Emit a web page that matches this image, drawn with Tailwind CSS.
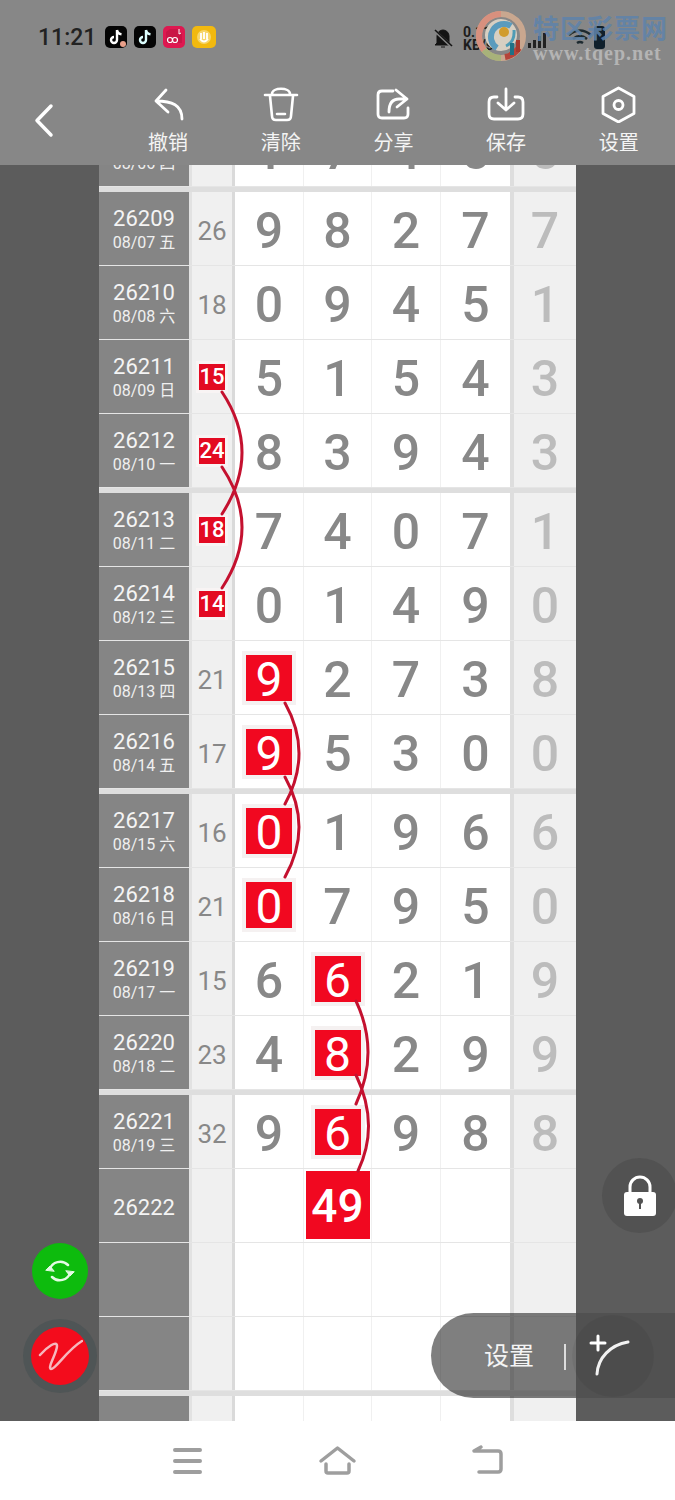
<!doctype html>
<html lang="zh-CN">
<head>
<meta charset="UTF-8" />
<meta name="viewport" content="width=device-width, initial-scale=1.0" />
<title>走势图</title>
<script src="https://cdn.jsdelivr.net/npm/@tailwindcss/browser@4"></script>
</head>
<body class="relative w-[675px] h-[1500px] overflow-hidden bg-white font-['Roboto','Noto_Sans_CJK_SC',sans-serif]">

<!-- Status bar + toolbar -->
<header class="h-[165px] bg-[#878787] relative z-10">
  <div class="h-[85px] flex pl-[38px] pt-[26px] items-start">
    <span class="text-[23px] leading-[23px] font-medium text-[#222] w-[67px]">11:21</span>
    <div class="flex gap-[7px]">
      <svg width="22" height="22" viewBox="0 0 22 22"><rect width="22" height="22" rx="5" fill="#050505"/><path d="M12 4v10a3 3 0 1 1-3-3M12 4c.4 2.6 2 4 4.500 4.300" fill="none" stroke="#fff" stroke-width="2.400"/><circle cx="18" cy="18" r="3" fill="#e9a08a"/></svg>
      <svg width="22" height="22" viewBox="0 0 22 22"><rect width="22" height="22" rx="5" fill="#050505"/><path d="M12 4v10a3 3 0 1 1-3-3M12 4c.4 2.600 2 4 4.500 4.300" fill="none" stroke="#dff" stroke-width="2.400"/></svg>
      <svg width="22" height="22" viewBox="0 0 22 22"><rect width="22" height="22" rx="5" fill="#de1850"/><path d="M3 6l4-3h8l4 5v9H3z" fill="#c91546"/><circle cx="7" cy="14" r="2.500" fill="none" stroke="#fff" stroke-width="1.200"/><circle cx="12" cy="14" r="2.500" fill="none" stroke="#fff" stroke-width="1.200"/><path d="M16 3v5l2-1" stroke="#fff" fill="none"/></svg>
      <svg width="24" height="22" viewBox="0 0 24 22"><rect width="24" height="22" rx="5" fill="#f2b90f"/><circle cx="12" cy="11" r="7" fill="#f7d66a"/><path d="M9 7v6M12 6v7M15 7v6M8 13q4 5 8 0" stroke="#fff" stroke-width="1.800" fill="none"/></svg>
    </div>
    <svg class="ml-[216px] mt-[1px]" width="22" height="22" viewBox="0 0 22 22"><path d="M5 16V9a6 6 0 0 1 12 0v7l2 2H3zM9 20h4" fill="#141414" stroke="#141414"/><path d="M2 3l18 17" stroke="#878787" stroke-width="3"/><path d="M3 3l17 16" stroke="#141414" stroke-width="1.600"/></svg>
    <div class="ml-[9px] text-[14px] leading-[13px] font-bold text-[#1d1d1d] w-[30px]">0.11<br />KB/s</div>
    <div class="flex items-end h-[22px] gap-[2px] ml-[35px]">
      <span class="w-[3px] h-[5px] bg-[#222]"></span><span class="w-[3px] h-[8px] bg-[#222]"></span><span class="w-[3px] h-[12px] bg-[#222]"></span><span class="w-[3px] h-[15px] bg-[#222]"></span>
    </div>
    <svg class="ml-[22px]" width="24" height="22" viewBox="0 0 24 22"><path d="M1 9q11-9 22 0M5 13q7-6 14 0M9 17q3-2 6 0" fill="none" stroke="#1d2a30" stroke-width="2.500"/></svg>
    <span class="ml-[2px] w-[11px] h-[23px] rounded-[3px] bg-[#10202c]"></span>
  </div>
  <nav class="flex items-start">
    <div class="w-[112px] pl-[30px] pt-[15px]">
      <svg width="30" height="40" viewBox="30 100 30 40"><path d="M51 106L37 120.500L51 135" fill="none" stroke="#fff" stroke-width="3.500" stroke-linecap="round" stroke-linejoin="round"/></svg>
    </div>
    <div class="w-[113px] flex flex-col items-center text-[20px] leading-[24px] text-[#f4f4f4]">
      <svg class="mb-[8px]" width="40" height="38" viewBox="148 85 40 38"><path d="M166 90L156 101L168 112M156 101C172 101 182 105 182 119" fill="none" stroke="#fff" stroke-width="2.800" stroke-linecap="round" stroke-linejoin="round"/></svg>
      <span>撤销</span>
    </div>
    <div class="w-[113px] flex flex-col items-center text-[20px] leading-[24px] text-[#f4f4f4]">
      <svg class="mb-[8px]" width="40" height="38" viewBox="261 85 40 38"><path d="M265 95H297M272 94C272 87 290 87 290 94M270 96L272 116Q272 120 276 120H287Q291 120 291 116L293 96M277 114H285" fill="none" stroke="#fff" stroke-width="2.600" stroke-linecap="round" stroke-linejoin="round"/></svg>
      <span>清除</span>
    </div>
    <div class="w-[113px] flex flex-col items-center text-[20px] leading-[24px] text-[#f4f4f4]">
      <svg class="mb-[8px]" width="40" height="38" viewBox="374 85 40 38"><path d="M394 91H383Q379 91 379 95V114Q379 118 383 118H405Q409 118 409 114V108M397 90L408 99L398 107M408 99H400Q390 99 390 112" fill="none" stroke="#fff" stroke-width="2.800" stroke-linecap="round" stroke-linejoin="round"/></svg>
      <span>分享</span>
    </div>
    <div class="w-[113px] flex flex-col items-center text-[20px] leading-[24px] text-[#f4f4f4]">
      <svg class="mb-[8px]" width="40" height="38" viewBox="486 85 40 38"><path d="M497 97H494Q489 97 489 102V114Q489 119 494 119H518Q523 119 523 114V102Q523 97 518 97H515M506 89V110M498 103L506 110L514 103" fill="none" stroke="#fff" stroke-width="2.800" stroke-linecap="round" stroke-linejoin="round"/></svg>
      <span>保存</span>
    </div>
    <div class="w-[113px] flex flex-col items-center text-[20px] leading-[24px] text-[#f4f4f4]">
      <svg class="mb-[8px]" width="40" height="38" viewBox="599 85 40 38"><path d="M618.500 88L634 96.500V113.500L618.500 122L603 113.500V96.500Z" fill="none" stroke="#fff" stroke-width="2.800" stroke-linejoin="round"/><circle cx="618.500" cy="105" r="4.500" fill="none" stroke="#fff" stroke-width="2.800"/></svg>
      <span>设置</span>
    </div>
  </nav>
</header>

<!-- Watermark -->
<div class="absolute z-20 left-[475px] top-[10px] flex items-start">
  <svg width="52" height="52" viewBox="0 0 52 52" fill="none">
    <circle cx="26" cy="26" r="22" stroke="#c9a78f" stroke-width="6"/>
    <path d="M26 4A22 22 0 0 0 9 40" stroke="#d8907e" stroke-width="6"/>
    <path d="M9 40A22 22 0 0 0 26 48" stroke="#a8b27a" stroke-width="6"/>
    <path d="M44 38A22 22 0 0 1 30 47" stroke="#b5443a" stroke-width="6"/>
    <circle cx="26" cy="25" r="16" fill="#d7cfc2"/>
    <path d="M36 16A13 13 0 1 0 22 38" stroke="#5a9bbd" stroke-width="6"/>
    <circle cx="29" cy="22" r="5" fill="#d19c2e"/>
    <path d="M31 36Q40 32 39 20" stroke="#4f9cb5" stroke-width="3"/>
    <path d="M37 33v12" stroke="#1f7186" stroke-width="4"/>
    <path d="M43 30v12" stroke="#a5382c" stroke-width="4"/>
  </svg>
  <div class="ml-[6px] mt-[5px]">
    <div class="text-[26px] leading-[28px] tracking-[1px] font-bold text-[#5f83aa]/90 whitespace-nowrap">特区彩票网</div>
    <div class="font-['Liberation_Serif',serif] text-[20px] leading-[20px] font-bold tracking-[1px] text-[#b4b4b4] whitespace-nowrap">www.tqep.net</div>
  </div>
</div>

<!-- Chart -->
<main class="h-[1256px] flex bg-[#5c5c5c] overflow-hidden">
  <div class="w-[99px]"></div>
  <div id="chart" class="w-[477px] mt-[-52px] bg-white"></div>
</main>

<!-- Connecting lines -->
<svg class="absolute left-0 top-0 z-[5] pointer-events-none" width="675" height="1500" viewBox="0 0 675 1500" fill="none" stroke="#c4112f" stroke-width="3" stroke-linecap="round">
  <path d="M222 392Q262 452 222 514M222 467Q262 527 222 588" />
  <path d="M285 703Q313 753 285 804M285 777Q313 827 285 877" />
  <path d="M356 1001Q380 1052 356 1104M356 1075Q380 1125 358 1171" />
</svg>

<!-- Floating buttons -->
<div class="absolute z-10 left-[32px] top-[1243px] w-[56px] h-[56px] rounded-full bg-[#0dbb0d] flex items-center justify-center">
  <svg width="32" height="32" viewBox="0 0 32 32" fill="none" stroke="#e4fbe4" stroke-width="2.500" stroke-linecap="round"><path d="M6 14C8 7 18 4 24 10M26 18C24 25 14 28 8 22"/><path d="M2 15L6 11L10 16Z M30 17L26 21L22 16Z" fill="#e4fbe4" stroke-width="1"/></svg>
</div>
<div class="absolute z-10 left-[23px] top-[1319px] w-[74px] h-[74px] rounded-full bg-[#4f5556] flex items-center justify-center">
  <div class="w-[58px] h-[58px] rounded-full bg-[#f30c1c] flex items-center justify-center">
    <svg width="46" height="46" viewBox="0 0 46 46" fill="none" stroke="#f6b7bd" stroke-width="2.500" stroke-linecap="round"><path d="M3 22C10 14 20 7 20 13C20 20 10 35 14 36C18 37 30 17 45 8"/></svg>
  </div>
</div>
<div class="absolute z-10 left-[602px] top-[1158px] w-[75px] h-[75px] rounded-full bg-[#525252] flex items-center justify-center">
  <svg width="36" height="42" viewBox="0 0 36 42"><path d="M8 19V12a10 10 0 0 1 20 0v7" fill="none" stroke="#fff" stroke-width="3"/><rect x="2" y="17" width="32" height="24" rx="3" fill="#fff"/><circle cx="18" cy="26" r="3" fill="#525252"/><path d="M18 27v7" stroke="#525252" stroke-width="2"/></svg>
</div>
<div class="absolute z-10 left-[431px] top-[1313px] w-[244px] h-[85px] flex">
  <div class="w-[145px] rounded-l-[43px] bg-black/50 flex items-center pl-[53px] pt-[2px]">
    <span class="text-[25px] leading-[30px] text-[#f4f4f4]">设置</span>
    <span class="ml-[30px] w-[2px] h-[26px] bg-[#ddd]"></span>
  </div>
  <div class="w-[99px] bg-[#515151] flex items-center">
    <svg class="ml-[10px]" width="48" height="46" viewBox="0 0 48 46" fill="none" stroke="#fff" stroke-width="3" stroke-linecap="round"><path d="M11 41C12 25 24 12 42 9"/></svg>
  </div>
</div>
<div class="absolute z-10 left-[572px] top-[1315px] w-[82px] h-[82px] rounded-full bg-black/5"></div>
<svg class="absolute z-10 left-[586px] top-[1331px]" width="24" height="24" viewBox="0 0 24 24" stroke="#fff" stroke-width="3" stroke-linecap="round"><path d="M5 12H19M12 5V19"/></svg>

<!-- System navigation -->
<footer class="h-[79px] flex items-start justify-center relative">
  <svg width="675" height="79" viewBox="0 1421 675 79" fill="none" stroke="#9e9e9e" stroke-width="4" stroke-linecap="round" stroke-linejoin="round">
    <path d="M175 1450H200M175 1461H200M175 1472H200" />
    <path d="M321 1461L337.500 1448L354 1461M326 1464V1471Q326 1473 328 1473H347Q349 1473 349 1471V1464" stroke-width="3.500" />
    <path d="M474 1451H498Q501 1451 501 1454V1469Q501 1472 498 1472H479M474 1451L481 1447" stroke-width="3.500" />
  </svg>
</footer>

<script>
  // id, date, sum, four digits, last, highlight
  const rows = [
    ["", "08/06 四", "", ["1", "7", "4", "5"], "5"],
    ["26209", "08/07 五", "26", ["9", "8", "2", "7"], "7"],
    ["26210", "08/08 六", "18", ["0", "9", "4", "5"], "1"],
    ["26211", "08/09 日", "15", ["5", "1", "5", "4"], "3", "sum"],
    ["26212", "08/10 一", "24", ["8", "3", "9", "4"], "3", "sum"],
    ["26213", "08/11 二", "18", ["7", "4", "0", "7"], "1", "sum"],
    ["26214", "08/12 三", "14", ["0", "1", "4", "9"], "0", "sum"],
    ["26215", "08/13 四", "21", ["9", "2", "7", "3"], "8", 0],
    ["26216", "08/14 五", "17", ["9", "5", "3", "0"], "0", 0],
    ["26217", "08/15 六", "16", ["0", "1", "9", "6"], "6", 0],
    ["26218", "08/16 日", "21", ["0", "7", "9", "5"], "0", 0],
    ["26219", "08/17 一", "15", ["6", "6", "2", "1"], "9", 1],
    ["26220", "08/18 二", "23", ["4", "8", "2", "9"], "9", 1],
    ["26221", "08/19 三", "32", ["9", "6", "9", "8"], "8", 1],
    ["26222", "", "", ["", "49", "", ""], "", "next"],
    ["", "", "", ["", "", "", ""], ""],
    ["", "", "", ["", "", "", ""], ""],
    ["", "", "", ["", "", "", ""], ""],
  ];

  const widths = [
    "w-[69px] border-r border-[#f0f0f0]",
    "w-[68px] border-r border-[#f0f0f0]",
    "w-[69px] border-r border-[#f0f0f0]",
    "w-[73px] border-r-4 border-[#dedede]",
  ];

  function digitCell(value, i, row) {
    let inner = `<span class="text-[50px] leading-none font-medium text-[#888]">${value}</span>`;
    if (row[5] === i) {
      inner = `<span class="w-[46px] h-[46px] mb-[3px] pt-[4px] bg-[#f10820] ring-4 ring-[#f5f1f1] flex items-center justify-center text-[48px] leading-none text-white">${value}</span>`;
    }
    if (row[5] === "next" && i === 1) {
      inner = `<span class="w-[64px] h-[68px] mb-[5px] pt-[2px] bg-[#f10820] flex items-center justify-center text-[46px] leading-none font-medium text-white">${value}</span>`;
    }
    return `<div class="${widths[i]} pt-[4px] flex items-center justify-center">${inner}</div>`;
  }

  function renderRow(row, index) {
    const sum = row[5] === "sum"
      ? `<span class="w-[26px] h-[26px] mb-[3px] bg-[#e30a22] ring-3 ring-[#f8f4f4] flex items-center justify-center text-[22px] leading-none font-medium text-white">${row[2]}</span>`
      : `<span class="text-[26px] leading-none text-[#888]">${row[2]}</span>`;
    const id = row[0] ? `<span class="text-[22px] leading-[24px] text-[#f4f4f4]">${row[0]}</span>` : "";
    const date = row[1] ? `<span class="text-[16px] leading-[24px] text-[#f0f0f0]">${row[1]}</span>` : "";
    const cells = row[3].map((value, i) => digitCell(value, i, row)).join("");
    const divider = index % 4 === 0
      ? `<div class="h-[5px] bg-[#dedede]"></div>`
      : "";
    const idCell = index === 0
      ? `<div class="w-[93px] pt-[28px] border-r-3 border-[#e2e2e2] bg-[#858585] flex flex-col items-center justify-center">${date}</div>`
      : `<div class="w-[93px] pt-[4px] border-r-3 border-[#e2e2e2] bg-[#858585] flex flex-col items-center justify-center">${id}${date}</div>`;
    return `
      <div class="flex h-[74px] border-b border-[#e5e5e5]">
        ${idCell}
        <div class="w-[43px] pt-[4px] border-r-3 border-[#dadada] bg-[#f0f0f0] flex items-center justify-center">${sum}</div>
        ${cells}
        <div class="w-[62px] pt-[4px] bg-[#f0f0f0] flex items-center justify-center">
          <span class="text-[50px] leading-none font-medium text-[#bcbcbc]">${row[4]}</span>
        </div>
      </div>${divider}`;
  }

  document.getElementById("chart").innerHTML = rows.map(renderRow).join("");
</script>
</body>
</html>
